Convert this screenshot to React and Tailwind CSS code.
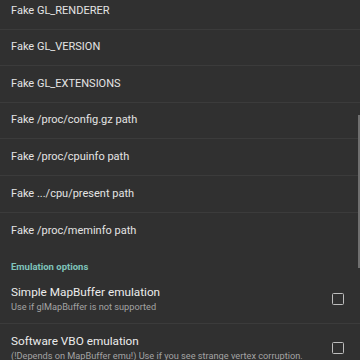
import React from 'react';

const PLAIN = [
  'Fake GL_RENDERER',
  'Fake GL_VERSION',
  'Fake GL_EXTENSIONS',
  'Fake /proc/config.gz path',
  'Fake /proc/cpuinfo path',
  'Fake .../cpu/present path',
  'Fake /proc/meminfo path',
];

function Checkbox() {
  return <div className="w-3 h-3 shrink-0 rounded-[1.5px] border-[1.5px] border-[#bdbdbd]" />;
}

function CheckRow({ title, summary, tall }) {
  return (
    <div className={`flex items-center gap-4 pl-[11px] pr-4 pt-[10px] border-b border-[#3b3b3b] ${tall ? 'pb-[20px]' : 'pb-[10px]'}`}>
      <div className="flex-1 min-w-0">
        <div className="text-[11.75px] leading-[15px] text-[#ececec]">{title}</div>
        <div className="text-[9.2px] leading-[13px] text-[#a3a3a3] whitespace-nowrap">{summary}</div>
      </div>
      <Checkbox />
    </div>
  );
}

export default function App() {
  return (
    <div className="relative w-[360px] h-[360px] overflow-hidden bg-[#303030]" style={{ fontFamily: 'Roboto, "Noto Sans", sans-serif' }}>
      <div className="-mt-[7px]">
        {PLAIN.map((t, i) => (
          <div
            key={t}
            className={`h-[36.6px] flex items-center pl-[11px] text-[11px] text-[#e4e4e4] ${i < PLAIN.length - 1 ? 'border-b border-[#3b3b3b]' : ''}`}
          >
            {t}
          </div>
        ))}
        <div className="pl-[11px] pt-[12px] pb-[1.5px] text-[9.5px] leading-[12px] font-bold text-[#7fc4bb]">Emulation options</div>
        <CheckRow title="Simple MapBuffer emulation" summary="Use if glMapBuffer is not supported" />
        <CheckRow
          tall
          title="Software VBO emulation"
          summary="(!Depends on MapBuffer emu!) Use if you see strange vertex corruption."
        />
      </div>
      <div className="absolute right-[0.5px] top-[115px] w-[2px] h-[153px] bg-[#707070]" />
    </div>
  );
}
